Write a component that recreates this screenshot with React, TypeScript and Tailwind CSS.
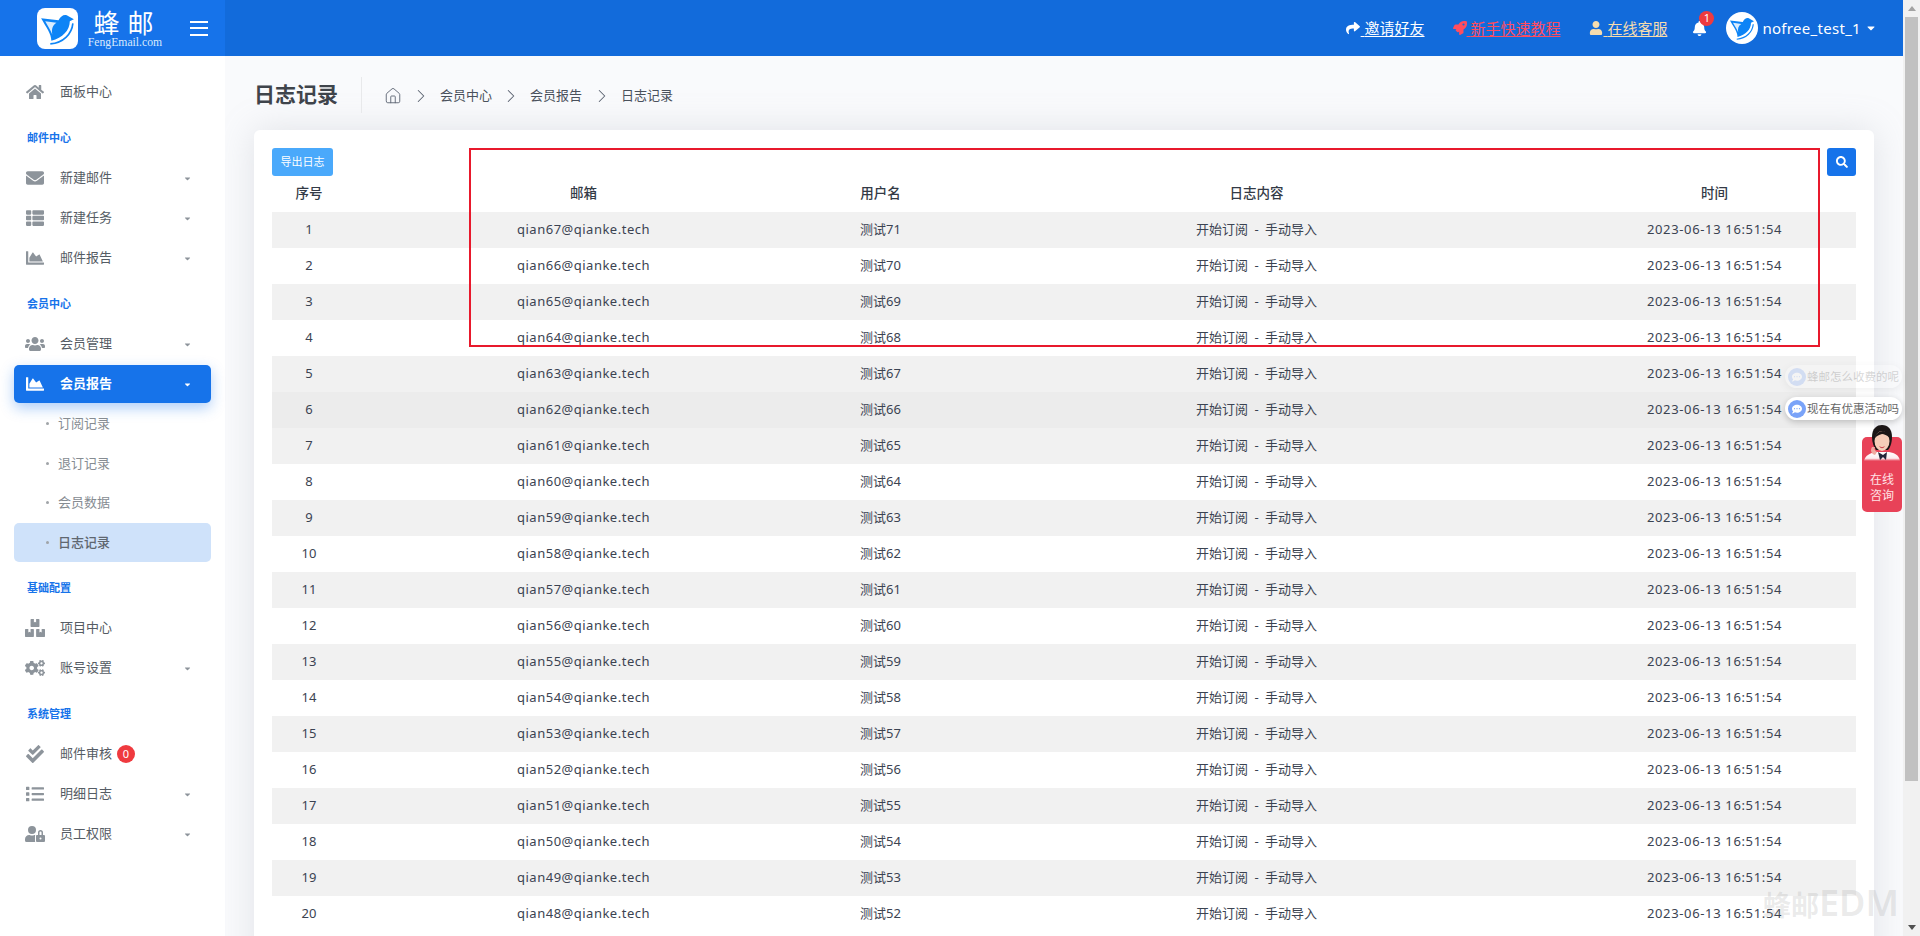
import React from "react";
import {
  FaHome, FaEnvelope, FaThList, FaChartArea, FaUsers, FaBoxes, FaCogs, FaCheckDouble, FaList, FaUserLock,
  FaShare, FaRocket, FaUser, FaBell, FaSearch, FaCaretDown, FaCommentDots,
} from "react-icons/fa";
import { ChevronRight, House } from "lucide-react";

const FONT = "font-['Noto_Sans','Noto_Sans_CJK_SC',sans-serif]";

function Bird({ className }: { className?: string }) {
  return (
    <svg viewBox="0 0 40 40" className={className}>
      <path d="M4 10 L21 12 C23 8 26 6 29 7 L36 11 L32 13 C32 22 25 29 14 32 C14 25 9 19 4 10Z" fill="#0d84f6" />
      <path d="M8 13 L19 14.5 C15 17 14 21 15 26 C13 21 10 17 8 13Z" fill="#fff" opacity=".85" />
      <path d="M35 15 C34 25 26 34 13 35" stroke="#0d84f6" strokeWidth="1.6" fill="none" />
    </svg>
  );
}

type Item = { label: string; icon: React.ComponentType<{ className?: string }>; caret?: boolean; badge?: string; wide?: boolean };

function NavItem({ label, icon: Icon, caret, badge, wide }: Item) {
  return (
    <div className="flex h-10 items-center pl-[26px] pr-[33px] text-[13px] text-[#555c64]">
      <span className="flex w-[34px] shrink-0 items-center">
        <Icon className={wide ? "-ml-[1px] h-[20px] w-[20px] text-[#8d949b]" : "h-[18px] w-[18px] text-[#8d949b]"} />
      </span>
      <span>{label}</span>
      {badge ? (
        <span className="ml-[5px] flex h-[18px] w-[18px] items-center justify-center rounded-full bg-[#ef3a3f] text-[11px] text-white">{badge}</span>
      ) : null}
      {caret ? <FaCaretDown className="ml-auto h-[9px] w-[9px] text-[#8d949b]" /> : null}
    </div>
  );
}

function Section({ label }: { label: string }) {
  return <div className="mt-[6px] flex h-10 items-center pl-[27px] text-[11px] font-bold text-[#1673ea]">{label}</div>;
}

function SubItem({ label, active }: { label: string; active?: boolean }) {
  return (
    <div className={`mx-[14px] flex h-[39.5px] items-center rounded-[5px] pl-[32px] text-[13px] ${active ? "bg-[#cfe2fa] font-medium text-[#5f6770]" : "text-[#868c92]"}`}>
      <span className="mr-[9px] h-[3px] w-[3px] rounded-full bg-[#a0a4a8]" />
      {label}
    </div>
  );
}

function Sidebar() {
  return (
    <aside className="relative z-10 w-[225px] shrink-0 bg-white pt-[16px]">
      <NavItem label="面板中心" icon={FaHome} />
      <Section label="邮件中心" />
      <NavItem label="新建邮件" icon={FaEnvelope} caret />
      <NavItem label="新建任务" icon={FaThList} caret />
      <NavItem label="邮件报告" icon={FaChartArea} caret />
      <Section label="会员中心" />
      <NavItem label="会员管理" icon={FaUsers} caret wide />
      <div className="flex h-10 items-center px-[14px]">
        <div className="flex h-[38px] w-full items-center rounded-[5px] bg-[#1673ea] pl-[12px] pr-[19px] text-[13px] font-bold text-white shadow-[0_5px_14px_rgba(22,115,234,0.35)]">
          <span className="flex w-[34px] items-center"><FaChartArea className="h-[18px] w-[18px]" /></span>
          会员报告
          <FaCaretDown className="ml-auto h-[9px] w-[9px]" />
        </div>
      </div>
      <SubItem label="订阅记录" />
      <SubItem label="退订记录" />
      <SubItem label="会员数据" />
      <SubItem label="日志记录" active />
      <Section label="基础配置" />
      <NavItem label="项目中心" icon={FaBoxes} wide />
      <NavItem label="账号设置" icon={FaCogs} caret wide />
      <Section label="系统管理" />
      <NavItem label="邮件审核" icon={FaCheckDouble} badge="0" />
      <NavItem label="明细日志" icon={FaList} caret />
      <NavItem label="员工权限" icon={FaUserLock} caret wide />
    </aside>
  );
}

function HeaderLink({ icon: Icon, text, color, iconClass }: { icon: React.ComponentType<{ className?: string }>; text: string; color: string; iconClass: string }) {
  return (
    <span className={`flex items-center text-[15px] ${color}`}>
      <Icon className={iconClass} />
      <span className="underline underline-offset-2">&nbsp;{text}</span>
    </span>
  );
}

function Header() {
  return (
    <header className="relative z-20 flex h-14 shrink-0 bg-[#126bdb]">
      <div className="flex w-[225px] shrink-0 items-center bg-[#1673ea]">
        <div className="ml-[37px] flex h-[41px] w-[41px] items-center justify-center rounded-[8px] bg-white">
          <Bird className="h-[41px] w-[41px]" />
        </div>
        <div className="ml-[10px] flex w-[74px] flex-col items-center text-white">
          <span className="whitespace-nowrap pl-[5px] font-['Noto_Sans_CJK_SC',sans-serif] text-[26px] leading-[29px] tracking-[8px]">蜂邮</span>
          <span className="font-['Liberation_Serif',serif] text-[11.7px] leading-[13px] text-[#d9e9fc]">FengEmail.com</span>
        </div>
        <div className="ml-[28px] flex w-[18px] flex-col gap-[4.5px]">
          <span className="h-[2px] bg-white" />
          <span className="h-[2px] bg-white" />
          <span className="h-[2px] bg-white" />
        </div>
      </div>
      <div className="flex flex-1 items-center justify-end pr-[26px]">
        <HeaderLink icon={FaShare} text="邀请好友" color="text-white" iconClass="h-[14px] w-[16px] text-white" />
        <span className="w-[28px]" />
        <HeaderLink icon={FaRocket} text="新手快速教程" color="text-[#ff4d5f]" iconClass="h-[14px] w-[14px] text-[#ff4d5f]" />
        <span className="w-[29px]" />
        <HeaderLink icon={FaUser} text="在线客服" color="text-[#f6dcae]" iconClass="h-[14px] w-[14px] text-[#f6dcae]" />
        <span className="relative ml-[25px] flex h-4 w-4 items-center">
          <FaBell className="h-[15px] w-[15px] text-white" />
          <span className="absolute -top-[9px] left-[7px] flex h-[15px] w-[15px] items-center justify-center rounded-full bg-[#ef3a3f] text-[11px] text-white">1</span>
        </span>
        <span className="ml-[18px] flex h-[32px] w-[32px] items-center justify-center rounded-full bg-white">
          <Bird className="h-[30px] w-[30px]" />
        </span>
        <span className="ml-[4px] text-[15px] tracking-[0.3px] text-white">nofree_test_1</span>
        <FaCaretDown className="ml-[4px] h-[12px] w-[12px] text-white" />
      </div>
    </header>
  );
}

const rows = Array.from({ length: 20 }, (_, i) => ({
  no: i + 1,
  email: `qian${67 - i}@qianke.tech`,
  user: `测试${71 - i}`,
}));

function Table() {
  return (
    <table className="w-full table-fixed border-collapse text-center text-[13px] text-[#3b4351]">
      <colgroup>
        <col className="w-[74px]" />
        <col className="w-[475px]" />
        <col className="w-[119px]" />
        <col className="w-[633px]" />
        <col className="w-[283px]" />
      </colgroup>
      <thead>
        <tr className="h-9 text-[13.5px] text-[#333a46]">
          <th className="pb-[2px] font-medium">序号</th>
          <th className="pb-[2px] font-medium">邮箱</th>
          <th className="pb-[2px] font-medium">用户名</th>
          <th className="pb-[2px] font-medium">日志内容</th>
          <th className="pb-[2px] font-medium">时间</th>
        </tr>
      </thead>
      <tbody>
        {rows.map((r) => (
          <tr key={r.no} className={`h-9 ${r.no === 6 ? "bg-[#ececec]" : r.no % 2 === 1 ? "bg-[#f1f1f1]" : "bg-white"}`}>
            <td>{r.no}</td>
            <td className="tracking-[0.5px]">{r.email}</td>
            <td>{r.user}</td>
            <td className="[word-spacing:3px]">开始订阅 - 手动导入</td>
            <td className="tracking-[0.65px]">2023-06-13 16:51:54</td>
          </tr>
        ))}
      </tbody>
    </table>
  );
}

function Main() {
  return (
    <main className="min-w-0 flex-1 overflow-hidden bg-[#f9fafc] px-[29px]">
      <div className="flex h-[74px] items-center pt-[4px]">
        <h1 className="w-[107px] text-[21px] font-bold text-[#3f444b]">日志记录</h1>
        <span className="h-[36px] w-px bg-[#e8e9eb]" />
        <div className="flex items-center pl-[22px] pt-[1px] text-[13px] text-[#4a515c]">
          <House className="h-[18px] w-[18px] text-[#5a6270]" strokeWidth={1.2} />
          <ChevronRight className="ml-[8px] mr-[8px] h-[22px] w-[22px] text-[#5a6270]" strokeWidth={1.1} />
          <span>会员中心</span>
          <ChevronRight className="mx-[8px] h-[22px] w-[22px] text-[#5a6270]" strokeWidth={1.1} />
          <span>会员报告</span>
          <ChevronRight className="ml-[9px] mr-[8px] h-[22px] w-[22px] text-[#5a6270]" strokeWidth={1.1} />
          <span>日志记录</span>
        </div>
      </div>
      <section className="rounded-[6px] bg-white px-[18px] pt-[18px] pb-10 shadow-[0_0_35px_rgba(154,161,171,0.25)]">
        <div className="flex justify-between">
          <button className="h-[28px] w-[61px] rounded-[3px] bg-[#4aa9fb] text-[11px] text-white">导出日志</button>
          <button className="flex h-[28px] w-[29px] items-center justify-center rounded-[3px] bg-[#1673ea] text-white">
            <FaSearch className="h-[12px] w-[12px]" />
          </button>
        </div>
        <Table />
      </section>
    </main>
  );
}

function Scrollbar() {
  return (
    <div className="flex w-[17px] shrink-0 flex-col items-center bg-[#f1f1f1]">
      <div className="mt-[6px] h-0 w-0 border-x-[4px] border-b-[5px] border-x-transparent border-b-[#a3a3a3]" />
      <div className="mt-[6px] h-[764px] w-[13px] bg-[#c1c1c1]" />
      <div className="mt-auto mb-[6px] h-0 w-0 border-x-[4px] border-t-[5px] border-x-transparent border-t-[#505050]" />
    </div>
  );
}

function Bubble({ text, faded, top }: { text: string; faded?: boolean; top: string }) {
  return (
    <div className={`absolute left-[1785px] ${top} flex h-[23px] w-[117px] items-center whitespace-nowrap rounded-full bg-white pl-[3px] text-[11.5px] text-[#666] shadow-[0_2px_6px_rgba(0,0,0,0.2)] ${faded ? "opacity-25" : ""}`}>
      <span className="mr-px flex h-[18px] w-[18px] shrink-0 items-center justify-center rounded-full bg-[#7aa3f8] text-white">
        <FaCommentDots className="h-[10px] w-[10px]" />
      </span>
      {text}
    </div>
  );
}

function Consult() {
  return (
    <>
      <Bubble text="蜂邮怎么收费的呢" faded top="top-[365px]" />
      <Bubble text="现在有优惠活动吗" top="top-[397px]" />
      <div className="absolute left-[1862px] top-[437px] flex h-[75px] w-[40px] flex-col items-center justify-end rounded-[5px] bg-[#e84258] pb-[8px] text-[12px] leading-[16px] text-[#ffe3e6]">
        <span>在线</span>
        <span>咨询</span>
      </div>
      <svg viewBox="0 0 38 40" className="absolute left-[1863px] top-[423px] h-[40px] w-[38px]">
        <defs>
          <linearGradient id="fade" x1="0" y1="0" x2="0" y2="1">
            <stop offset="0" stopColor="#fff" />
            <stop offset=".7" stopColor="#fff" stopOpacity=".9" />
            <stop offset="1" stopColor="#fff" stopOpacity="0" />
          </linearGradient>
        </defs>
        <path d="M1 38 C2 32 8 30 12 29 L26 29 C32 30 36 32 37 38 Z" fill="url(#fade)" />
        <path d="M15 29 L20 32 L24 29 L23 37 L20 34 L17 37 Z" fill="#26263a" />
        <path d="M9 14 C9 5 14 2 19 2 C25 2 29 6 29 14 C29 20 27 25 25 27 L13 27 C11 24 9 20 9 14Z" fill="#1b1616" />
        <ellipse cx="19" cy="18" rx="7.5" ry="10" fill="#f6cdb8" />
        <path d="M11.5 16 C12 11 16 8 20 8 C24 8 26 11 26.5 15 C24 12 21 11 19 11 C16 12 13 13 11.5 16Z" fill="#1b1616" />
        <path d="M16 23 C18 24.5 20 24.5 22 23 C20 26 18 26 16 23Z" fill="#c9404a" />
        <path d="M9 24 C7 27 8 31 12 32 L14 29 C12 28 11 26 12 24 Z" fill="#f0a9a0" />
      </svg>
      <div className="absolute left-[1763px] top-[885px] flex items-baseline leading-[36px] text-[#969696]/20">
        <span className="text-[28px] font-bold leading-[36px]">蜂邮</span>
        <span className="text-[36px] font-semibold leading-[36px]">EDM</span>
      </div>
    </>
  );
}

export default function App() {
  return (
    <div className={`relative flex h-[936px] w-[1920px] overflow-hidden ${FONT}`}>
      <div className="flex min-w-0 flex-1 flex-col">
        <Header />
        <div className="flex min-h-0 flex-1">
          <Sidebar />
          <Main />
        </div>
      </div>
      <Scrollbar />
      <div className="absolute left-[469px] top-[148px] h-[199px] w-[1351px] border-2 border-[#e8192c]" />
      <Consult />
    </div>
  );
}
